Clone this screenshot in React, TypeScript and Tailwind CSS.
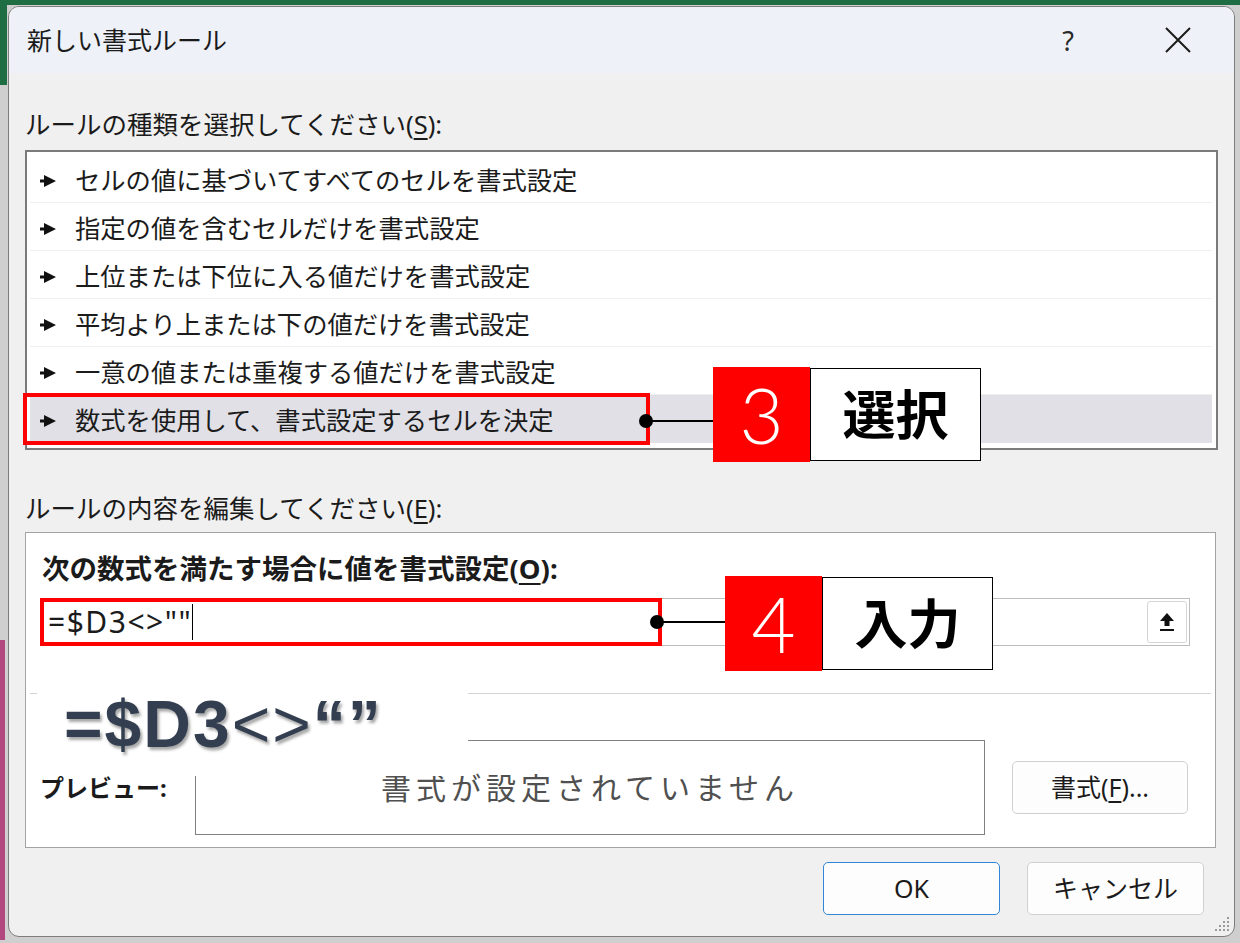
import React from 'react'

const rules = [
  'セルの値に基づいてすべてのセルを書式設定',
  '指定の値を含むセルだけを書式設定',
  '上位または下位に入る値だけを書式設定',
  '平均より上または下の値だけを書式設定',
  '一意の値または重複する値だけを書式設定',
  '数式を使用して、書式設定するセルを決定',
]

const jp = "font-['Noto_Sans','Noto_Sans_CJK_JP',sans-serif]"

const Pointer = () => (
  <svg width="16" height="14" viewBox="0 0 16 14" className="shrink-0">
    <path d="M0 5.6 L4 5.6 L4 1 L16 7 L4 13 L4 8.4 L0 8.4 Z" fill="#111" />
  </svg>
)

const Callout = ({ num, label, className }: { num: string; label: string; className: string }) => (
  <div className={`absolute flex items-center ${className}`}>
    <div className="w-[97px] h-[95px] bg-[#ff0000] flex items-center justify-center text-white text-[76px] font-light leading-none font-['Lato','Noto_Sans',sans-serif]">
      {num}
    </div>
    <div className={`w-[171px] h-[93px] bg-white border-[1.5px] border-black flex items-center justify-center text-[53px] font-bold text-black leading-none ${jp}`}>
      {label}
    </div>
  </div>
)

export default function App() {
  return (
    <div className={`relative w-[1240px] h-[943px] overflow-hidden bg-[#cfcfcf] border-t-[5px] border-t-[#1f6d43] pl-[8px] pr-[5px] pt-[1px] pb-[6px] text-[#1b1b1b] ${jp}`}>
      <div className="absolute left-0 top-0 w-[7px] h-[80px] bg-[#1f6d43]" />
      <div className="absolute left-0 top-[635px] w-[5px] h-[300px] bg-[#b2477e]" />

      <div className="relative h-full rounded-[11px] border border-[#7d7d7d] bg-[#f0f0f0] flex flex-col overflow-hidden">
        {/* Title bar */}
        <div className="h-[66px] shrink-0 bg-[#eef2f8] flex items-center justify-between pl-[18px] pr-[42px]">
          <span className="text-[25px] leading-none">新しい書式ルール</span>
          <div className="flex items-center gap-[90px]">
            <span className="text-[27px] leading-none text-[#2a2a2a]">?</span>
            <svg width="28" height="28" viewBox="0 0 28 28">
              <path d="M2 2 L26 26 M26 2 L2 26" stroke="#1b1b1b" strokeWidth="2" fill="none" />
            </svg>
          </div>
        </div>

        {/* Body */}
        <div className="flex-1 flex flex-col px-[16px] pt-[35px]">
          <div className="h-[32px] leading-[32px] text-[25.5px]">
            ルールの種類を選択してください(<span className="underline underline-offset-4">S</span>):
          </div>

          <div className="mt-[10px] h-[300px] border-2 border-[#7b7b7b] bg-white pt-[3px] pl-[3px] pr-[4px]">
            {rules.map((rule, i) => (
              <div
                key={rule}
                className={`h-[48px] flex items-center pl-[10px] pt-[4px] gap-[19px] text-[25.3px] ${
                  i === rules.length - 1 ? 'bg-[#e0e0e6]' : 'border-b border-[#efefef]'
                }`}
              >
                <Pointer />
                <span>{rule}</span>
              </div>
            ))}
          </div>

          <div className="mt-[42px] h-[32px] leading-[32px] text-[25.5px]">
            ルールの内容を編集してください(<span className="underline underline-offset-4">E</span>):
          </div>

          <div className="mt-[8px] mr-[2px] h-[316px] border border-[#a3a3a3] bg-white flex flex-col">
            <div className="mt-[20px] ml-[16px] h-[32px] leading-[32px] text-[27.5px] font-bold">
              次の数式を満たす場合に値を書式設定(<span className="underline underline-offset-4">O</span>):
            </div>

            <div className="mt-[13px] ml-[14px] mr-[25px] h-[48px] border border-[#bdbdbd] flex items-center justify-between pl-[7px] pr-[2px]">
              <div className="flex items-center">
                <span className="text-[30px] leading-none tracking-[1.5px] font-['Noto_Sans',sans-serif]">=$D3&lt;&gt;""</span>
                <span className="w-px h-[36px] bg-black" />
              </div>
              <div className="w-[40px] h-[42px] border border-[#d5d5d5] rounded-[3px] bg-white flex items-center justify-center">
                <svg width="20" height="22" viewBox="0 0 20 22">
                  <path d="M10 2 L17 10 L12.5 10 L12.5 15 L7.5 15 L7.5 10 L3 10 Z" fill="#111" />
                  <rect x="3" y="18" width="14" height="2" fill="#111" />
                </svg>
              </div>
            </div>

            <div className="mt-[47px] mx-[4px] h-px bg-[#d3d3d3]" />

            <div className="mt-[46px] ml-[14px] flex items-center">
              <div className="w-[155px] text-[24px] font-bold">プレビュー:</div>
              <div className="w-[790px] h-[95px] border border-[#808080] flex items-center justify-center text-[30px] tracking-[5px] text-[#505050]">
                書式が設定されていません
              </div>
              <button className="ml-[27px] w-[176px] h-[53px] rounded-[5px] border border-[#d0d0d0] bg-[#fdfdfd] text-[25px]">
                書式(<span className="underline underline-offset-4">F</span>)...
              </button>
            </div>
          </div>

          <div className="mt-[14px] flex justify-end gap-[27px] pr-[14px]">
            <button className="w-[177px] h-[53px] rounded-[5px] border-[1.5px] border-[#3186d6] bg-[#fdfdfd] text-[25px] font-['Noto_Sans',sans-serif]">
              OK
            </button>
            <button className="w-[177px] h-[53px] rounded-[5px] border border-[#d0d0d0] bg-[#fdfdfd] text-[25px]">
              キャンセル
            </button>
          </div>
        </div>

        {/* Resize grip */}
        <svg className="absolute right-[4px] bottom-[4px]" width="16" height="16" viewBox="0 0 16 16">
          {[
            [13, 1], [13, 5], [9, 5], [13, 9], [9, 9], [5, 9], [13, 13], [9, 13], [5, 13], [1, 13],
          ].map(([x, y]) => (
            <rect key={`${x}-${y}`} x={x} y={y} width="2" height="2" fill="#9a9a9a" />
          ))}
        </svg>
      </div>

      {/* Annotations */}
      <div className="absolute left-[23px] top-[388px] w-[627px] h-[52px] border-4 border-[#ff0000]" />
      <div className="absolute left-[646px] top-[415px] w-[67px] h-[1.5px] bg-black" />
      <div className="absolute left-[639px] top-[409px] w-[14px] h-[14px] rounded-full bg-black" />
      <Callout num="3" label="選択" className="left-[713px] top-[362px]" />

      <div className="absolute left-[40px] top-[593px] w-[622px] h-[48px] border-4 border-[#ff0000]" />
      <div className="absolute left-[657px] top-[616px] w-[68px] h-[1.5px] bg-black" />
      <div className="absolute left-[650px] top-[610px] w-[14px] h-[14px] rounded-full bg-black" />
      <Callout num="4" label="入力" className="left-[725px] top-[571px]" />

      <div className="absolute left-[37px] top-[685px] w-[431px] h-[86px] bg-white pl-[27px] pt-[1px]">
        <span className="text-[66px] font-bold leading-none tracking-[2px] text-[#333f50] font-['Liberation_Sans',sans-serif] [text-shadow:2px_3px_3px_rgba(0,0,0,0.35)]">
          =$D3<span className="font-normal">&lt;&gt;</span>“”
        </span>
      </div>
    </div>
  )
}
